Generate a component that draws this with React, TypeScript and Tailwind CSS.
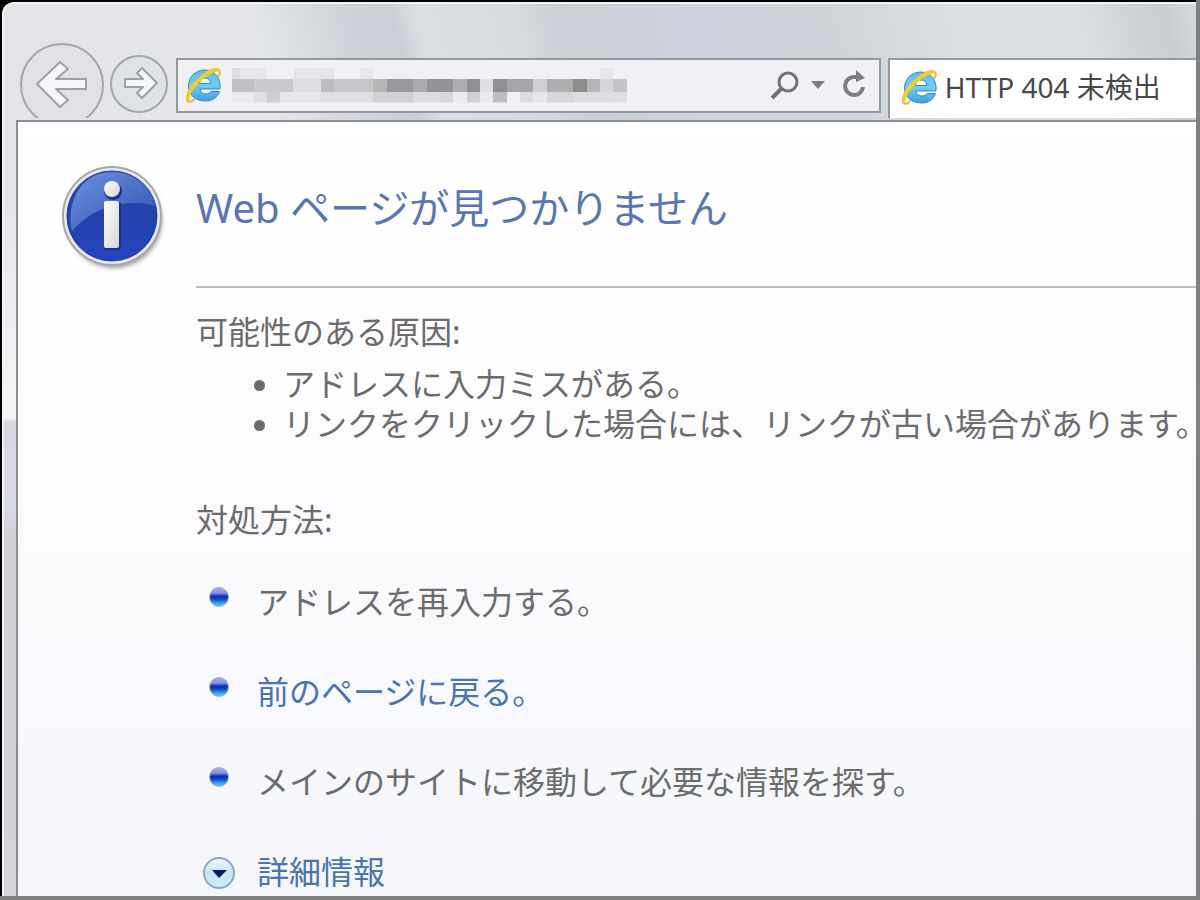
import { useState } from "react";
import type { ReactNode } from "react";

// [x, row, width, color]
const mosaic: [number, number, number, string][] = [
  [0, 0, 8, "#dcdedf"],
  [8, 0, 27, "#e6e7e9"],
  [62, 0, 40, "#e4e5e8"],
  [128, 0, 13, "#e6e8ea"],
  [368, 0, 13, "#e6e7ea"],
  [0, 1, 22, "#bfc0c2"],
  [22, 1, 39, "#c9cacc"],
  [61, 1, 28, "#dddee1"],
  [89, 1, 13, "#bcbdbf"],
  [102, 1, 39, "#c5c6c8"],
  [141, 1, 14, "#b5b6b8"],
  [155, 1, 26, "#98999c"],
  [181, 1, 14, "#a9abad"],
  [195, 1, 26, "#939497"],
  [221, 1, 14, "#adaeb1"],
  [235, 1, 13, "#909194"],
  [248, 1, 13, "#dedfe2"],
  [261, 1, 14, "#8f9093"],
  [275, 1, 26, "#a5a6a8"],
  [301, 1, 14, "#cfd0d2"],
  [315, 1, 26, "#adaeb0"],
  [341, 1, 14, "#8c8e8c"],
  [355, 1, 13, "#b6b7b9"],
  [368, 1, 13, "#d5d6d9"],
  [381, 1, 14, "#c3c4c6"],
  [0, 2, 22, "#eaebee"],
  [22, 2, 13, "#dfe0e3"],
  [35, 2, 13, "#cecfd2"],
  [48, 2, 40, "#e6e7ea"],
  [88, 2, 53, "#dedfe2"],
  [141, 2, 40, "#d0d1d3"],
  [181, 2, 27, "#dddee0"],
  [208, 2, 13, "#d6d7da"],
  [221, 2, 14, "#ebecef"],
  [235, 2, 13, "#d0d1d4"],
  [248, 2, 13, "#eaebee"],
  [261, 2, 14, "#bcbdc0"],
  [288, 2, 13, "#dbdcdf"],
  [301, 2, 14, "#e6e7ea"],
  [315, 2, 26, "#d6d7da"],
  [341, 2, 40, "#dcdde0"],
  [381, 2, 14, "#dedfe2"],
];

const rowTop = [0, 11, 24];
const rowHeight = [11, 13, 11];

function AddressMosaic() {
  return (
    <svg
      className="pointer-events-none absolute left-0 top-1/2 -translate-y-1/2"
      width="396"
      height="35"
      viewBox="0 0 396 35"
      shapeRendering="crispEdges"
      aria-hidden="true"
    >
      {mosaic.map(([x, row, width, color]) => (
        <rect
          key={`${row}-${x}`}
          x={x}
          y={rowTop[row]}
          width={width}
          height={rowHeight[row]}
          fill={color}
        />
      ))}
    </svg>
  );
}

function BrowserLogo() {
  return (
    <svg className="size-9 shrink-0" viewBox="0 0 36 36" fill="none" aria-hidden="true">
      <defs>
        <linearGradient id="logoBlue" x1="0" y1="0" x2="0" y2="1">
          <stop offset="0" stopColor="#5fbdec" />
          <stop offset="0.5" stopColor="#6fcdf7" />
          <stop offset="1" stopColor="#3d9fdf" />
        </linearGradient>
        <linearGradient id="logoGold" x1="0" y1="1" x2="1" y2="0">
          <stop offset="0" stopColor="#f5a94a" />
          <stop offset="0.5" stopColor="#f8d224" />
          <stop offset="1" stopColor="#f3ab3c" />
        </linearGradient>
      </defs>
      <path
        d="M35 22H15C15.500 25.500 18 27 21 27C23.500 27 25 26 26 24.500H34.500C32.500 30.500 27.500 34 20.500 34C10.500 34 3.500 28 3.500 19C3.500 9.500 11 3 20 3C30 3 36 11 35 22ZM14.500 16.500H25.800C25.500 13 23.500 11 20.500 11C17 11 15 13 14.500 16.500Z"
        fill="url(#logoBlue)"
        stroke="#3a86c4"
        strokeWidth="1"
      />
      <path
        d="M9 32.500C6 35.500 2.500 35.500 2 32.500C1 26 8 16 17 9C25 2.500 33 0 34.500 4C35 5.500 34.500 7.500 33.500 9"
        stroke="url(#logoGold)"
        strokeWidth="2"
        strokeLinecap="round"
      />
      <path
        d="M3 31C3 25 10 16 18 9.500C23 5.500 28 3 31.500 3"
        stroke="#f5cd2b"
        strokeWidth="4"
        strokeLinecap="round"
      />
    </svg>
  );
}

function InfoIcon() {
  return (
    <svg className="h-[108px] w-[104px]" viewBox="0 0 104 108" aria-hidden="true">
      <defs>
        <linearGradient id="infoBase" x1="0" y1="0" x2="0" y2="1">
          <stop offset="0" stopColor="#2c50b4" />
          <stop offset="0.5" stopColor="#2440ac" />
          <stop offset="1" stopColor="#2346be" />
        </linearGradient>
        <linearGradient id="infoGloss" x1="0" y1="0" x2="1" y2="1">
          <stop offset="0" stopColor="#6f93dc" />
          <stop offset="1" stopColor="#2c4fb4" />
        </linearGradient>
        <linearGradient id="infoMark" x1="0" y1="0" x2="1" y2="1">
          <stop offset="0" stopColor="#ffffff" />
          <stop offset="1" stopColor="#d4d5da" />
        </linearGradient>
        <filter id="infoShadow" x="-20%" y="-20%" width="140%" height="140%">
          <feGaussianBlur stdDeviation="2" />
        </filter>
      </defs>
      <circle cx="52" cy="54" r="48" fill="#777" opacity="0.7" filter="url(#infoShadow)" />
      <circle cx="50" cy="50" r="49" fill="#e6e8ee" stroke="#a5a6a8" strokeWidth="2" />
      <circle cx="50" cy="50" r="45" fill="url(#infoBase)" stroke="#1f3a9c" strokeWidth="1" />
      <path
        d="M10 65C4 45 14 6 50 6A45 45 0 0 1 94 40C64 32 32 40 10 65Z"
        fill="url(#infoGloss)"
      />
      <rect x="42" y="36" width="17" height="48" rx="2" fill="#1c2f8c" />
      <circle cx="51" cy="25" r="9" fill="#1c2f8c" />
      <rect x="42" y="35" width="15" height="47" rx="2" fill="url(#infoMark)" />
      <circle cx="50" cy="23" r="8" fill="url(#infoMark)" />
    </svg>
  );
}

function BlueBullet() {
  return (
    <span className="mt-[5px] h-5 w-5 shrink-0 rounded-full border border-[#a4aed4] bg-[linear-gradient(180deg,#a4a8e8_0%,#8a92e0_28%,#0a2cae_45%,#0d48c8_62%,#3fa8ea_85%,#5cc4f0_100%)]" />
  );
}

function SolutionRow({ children }: { children: ReactNode }) {
  return (
    <li className="flex items-start gap-7 pl-[13px]">
      <BlueBullet />
      <span>{children}</span>
    </li>
  );
}

function Toolbar() {
  return (
    <div className="flex h-[76px] items-start overflow-hidden">
      <button type="button" aria-label="戻る" className="ml-[2px] shrink-0">
        <svg width="86" height="86" viewBox="0 0 86 86" aria-hidden="true">
          <circle cx="43" cy="43" r="41" fill="#e0e2e6" stroke="#a5a6aa" strokeWidth="2" />
          <path
            d="M18 42L41 20L49 27L37 37H67V47H37L49 58L41 65Z"
            fill="#f5f6f9"
            stroke="#a0a1a5"
            strokeWidth="2"
            strokeLinejoin="round"
          />
        </svg>
      </button>
      <button type="button" aria-label="進む" className="ml-1 mt-3 shrink-0">
        <svg width="60" height="60" viewBox="0 0 60 60" aria-hidden="true">
          <circle cx="30" cy="30" r="28" fill="#e0e3e6" stroke="#a5a6aa" strokeWidth="2" />
          <path
            d="M48 29L33 14L28 19L34 25H16V33H34L28 39L33 44Z"
            fill="#f5f6f9"
            stroke="#a0a1a5"
            strokeWidth="2"
            strokeLinejoin="round"
          />
        </svg>
      </button>
      <div className="ml-[7px] mt-4 flex h-[55px] min-w-0 flex-[704] items-center border-2 border-[#95989c] bg-[#f0f1f5] pb-[2px] pl-[7px] pr-[10px]">
        <BrowserLogo />
        <div className="relative ml-[11px] h-full min-w-0 flex-1">
          <input
            type="text"
            aria-label="アドレス"
            className="h-full w-full bg-transparent outline-none"
          />
          <AddressMosaic />
        </div>
        <button type="button" aria-label="検索" className="shrink-0">
          <svg width="32" height="32" viewBox="0 0 32 32" fill="none" stroke="#727377" aria-hidden="true">
            <circle cx="19" cy="13" r="9" strokeWidth="3" />
            <path d="M12 20L3 29" strokeWidth="4" />
          </svg>
        </button>
        <button type="button" aria-label="履歴" className="ml-2 shrink-0">
          <svg width="18" height="10" viewBox="0 0 18 10" aria-hidden="true">
            <path d="M2 1H16L9 9Z" fill="#7c7d80" />
          </svg>
        </button>
        <button type="button" aria-label="更新" className="ml-3 shrink-0">
          <svg width="30" height="30" viewBox="0 0 30 30" aria-hidden="true">
            <path
              d="M17 7H15A9 9 0 1 0 24 17"
              fill="none"
              stroke="#7c7d80"
              strokeWidth="4"
            />
            <path d="M17 0L26 8L17 12Z" fill="#7c7d80" />
          </svg>
        </button>
      </div>
      <div className="ml-[7px] mt-4 flex h-[60px] flex-[304] items-center gap-2 whitespace-nowrap border-l-2 border-t-2 border-[#95989c] bg-white pb-1 pl-[11px] text-[28px] text-[#484848]">
        <BrowserLogo />
        <span>HTTP 404 未検出</span>
      </div>
    </div>
  );
}

export default function App() {
  const [showDetails, setShowDetails] = useState(false);

  return (
    <div className="flex min-h-screen flex-col border-b-4 border-r-4 border-[#808080] bg-black pl-[2px] pt-[2px] font-['Noto_Sans','Noto_Sans_CJK_JP',sans-serif]">
      <div className="flex flex-1 flex-col overflow-hidden rounded-tl-xl border-l-2 border-t-2 border-[#f4f5f7] bg-[#e2e4e8] bg-[linear-gradient(180deg,#e2e4e8_0px,#e4e5ea_200px,#f6f6f8_414px,#d6d7e0_418px,#d8d9e6_500px,#cfd0d4_540px,#d4d5da_100%)]">
        <header className="bg-[linear-gradient(75deg,#e2e4e8_0%,#e4e6ea_22%,#cdd2d8_31%,#c9cfd4_34%,#dadfe4_36%,#d6dbe0_44%,#c9cfd4_48%,#cfd3de_58%,#d0d5da_70%,#dadfe4_80%,#dadfe4_90%,#c8cdd1_97%,#d6dade_100%)] pb-[2px] pl-[13px] pt-[38px]">
          <Toolbar />
        </header>
        <main className="ml-3 flex flex-1 items-start border-l-2 border-t-2 border-[#8c8d90] bg-linear-to-b from-white via-[#fbfbfd] to-[#f4f6fa] text-[32px] leading-10 text-[#6c6c6c]">
          <div className="w-[178px] shrink-0 pl-11 pt-11">
            <InfoIcon />
          </div>
          <div className="min-w-0 flex-1">
            <h1 className="border-b-2 border-[#bcbcbc] pb-[50px] pt-[58px] text-[40px] leading-[56px] text-[#5a76b2]">
              Web ページが見つかりません
            </h1>
            <h2 className="mt-6">可能性のある原因:</h2>
            <ul className="mt-3 list-disc whitespace-nowrap pl-[87px]">
              <li>アドレスに入力ミスがある。</li>
              <li>リンクをクリックした場合には、リンクが古い場合があります。</li>
            </ul>
            <h2 className="mt-14">対処方法:</h2>
            <ul className="mt-[42px] space-y-[50px]">
              <SolutionRow>アドレスを再入力する。</SolutionRow>
              <SolutionRow>
                <a href="#back" className="text-[#4a74ac]">
                  前のページに戻る。
                </a>
              </SolutionRow>
              <SolutionRow>メインのサイトに移動して必要な情報を探す。</SolutionRow>
            </ul>
            <button
              type="button"
              aria-expanded={showDetails}
              onClick={() => setShowDetails(!showDetails)}
              className="mt-[50px] flex items-center gap-[21px] pl-[6px] text-[#4a74ac]"
            >
              <svg width="34" height="34" viewBox="0 0 34 34" aria-hidden="true">
                <defs>
                  <linearGradient id="detailsFill" x1="0" y1="0" x2="0" y2="1">
                    <stop offset="0" stopColor="#f4f9fd" />
                    <stop offset="0.5" stopColor="#c4e4f0" />
                    <stop offset="1" stopColor="#c8f2fa" />
                  </linearGradient>
                </defs>
                <circle cx="17" cy="18" r="15" fill="url(#detailsFill)" stroke="#8fa3d0" strokeWidth="2" />
                <path d="M10 15H25L17 23Z" fill="#0c1464" />
              </svg>
              <span>詳細情報</span>
            </button>
          </div>
        </main>
      </div>
    </div>
  );
}
